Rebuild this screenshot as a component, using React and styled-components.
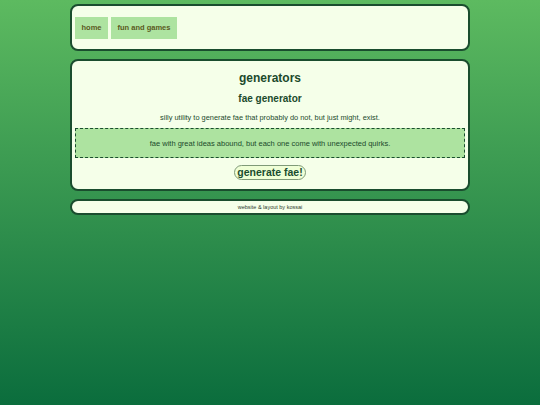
import { createGlobalStyle, styled } from "styled-components";

const GlobalStyle = createGlobalStyle`
  html, body {
    margin: 0;
    padding: 0;
    min-height: 100%;
  }
  body {
    min-height: 100vh;
    background: linear-gradient(to bottom, #5dba60, #0b6d3d);
    font-family: "Liberation Sans", Arial, sans-serif;
    color: #1b4a2c;
  }
`;

const Page = styled.div`
  width: 400px;
  margin: 0 auto;
  padding-top: 4px;
  display: flex;
  flex-direction: column;
  gap: 8px;
`;

const Card = styled.div`
  background: #f5ffe9;
  border: 2px solid #1a4d2e;
  border-radius: 8px;
  box-sizing: border-box;
`;

const Header = styled(Card)`
  height: 47px;
  padding: 10px 3px;
  display: flex;
  align-items: center;
`;

const UL = styled.ul`
  list-style: none;
  display: flex;
  margin: 0;
  padding: 0;
  gap: 3px;
`;

const NavLink = styled.a`
  display: block;
  background: #ade3a0;
  color: #5b5a22;
  font-size: 7.5px;
  font-weight: 700;
  padding: 7px 6.5px;
  line-height: 8px;
  text-decoration: none;
`;

const Main = styled(Card)`
  height: 132px;
  padding: 8px 3px 0;
  display: flex;
  flex-direction: column;
  align-items: center;
`;

const Title = styled.h1`
  margin: 0;
  font-size: 12px;
  line-height: 18px;
  font-weight: 700;
`;

const Subtitle = styled.h2`
  margin: 5px 0 0;
  font-size: 10px;
  line-height: 14px;
  font-weight: 700;
`;

const Desc = styled.p`
  margin: 7px 0 0;
  font-size: 7.4px;
  line-height: 10px;
`;

const Output = styled.div`
  margin-top: 5px;
  align-self: stretch;
  height: 30px;
  box-sizing: border-box;
  background: #ade3a0;
  border: 1px dashed #1a4d2e;
  display: flex;
  align-items: center;
  justify-content: center;
  font-size: 7.5px;
`;

const Button = styled.button`
  margin-top: 7px;
  font-family: inherit;
  font-size: 10.5px;
  font-weight: 700;
  color: #1a4d2e;
  background: #efffd6;
  border: 1px solid #7f9a78;
  border-radius: 8px;
  padding: 0 2px;
  height: 15px;
  line-height: 13px;
`;

const Footer = styled(Card)`
  height: 16px;
  display: flex;
  align-items: center;
  justify-content: center;
  font-size: 5.5px;
  color: #2c3a2c;
`;

export default function App() {
  return (
    <>
      <GlobalStyle />
      <Page>
        <Header>
          <nav>
            <UL>
              <li>
                <NavLink href="#">home</NavLink>
              </li>
              <li>
                <NavLink href="#">fun and games</NavLink>
              </li>
            </UL>
          </nav>
        </Header>
        <Main>
          <Title>generators</Title>
          <Subtitle>fae generator</Subtitle>
          <Desc>silly utility to generate fae that probably do not, but just might, exist.</Desc>
          <Output>fae with great ideas abound, but each one come with unexpected quirks.</Output>
          <Button>generate fae!</Button>
        </Main>
        <Footer>website &amp; layout by kossai</Footer>
      </Page>
    </>
  );
}
